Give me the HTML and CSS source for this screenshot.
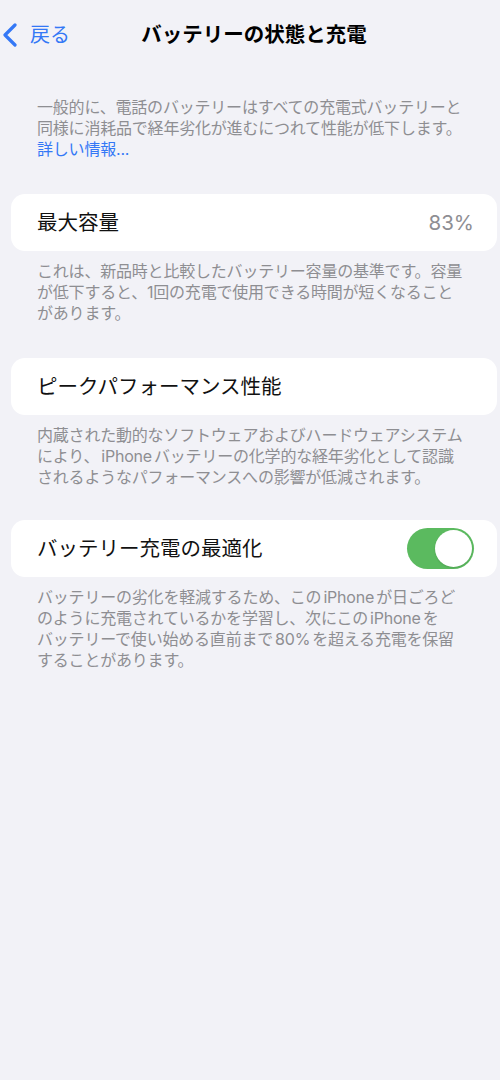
FILE: index.html
```html
<!DOCTYPE html>
<html lang="ja">
<head>
<meta charset="utf-8">
<link rel="stylesheet" href="styles.css">
</head>
<body>
<div class="screen">
  <header class="nav">
    <a class="back">
      <svg class="chev" width="16" height="24" viewBox="0 0 16 24"><path d="M13 2 L3 12 L13 22" fill="none" stroke="#3478F6" stroke-width="3.2" stroke-linecap="round" stroke-linejoin="round"/></svg>
      <span>戻る</span>
    </a>
    <h1 class="title">バッテリーの状態と充電</h1>
  </header>

  <p class="note intro">一般的に、電話のバッテリーはすべての充電式バッテリーと<br>同様に消耗品で経年劣化が進むにつれて性能が低下します。<br><span class="link">詳しい情報...</span></p>

  <section class="group">
    <div class="card">
      <span class="label">最大容量</span>
      <span class="value">83%</span>
    </div>
    <p class="note">これは、新品時と比較したバッテリー容量の基準です。容量<br>が低下すると、1回の充電で使用できる時間が短くなること<br>があります。</p>
  </section>

  <section class="group">
    <div class="card">
      <span class="label">ピークパフォーマンス性能</span>
    </div>
    <p class="note">内蔵された動的なソフトウェアおよびハードウェアシステム<br>により、<span class="latin">iPhone</span>バッテリーの化学的な経年劣化として認識<br>されるようなパフォーマンスへの影響が低減されます。</p>
  </section>

  <section class="group last">
    <div class="card">
      <span class="label">バッテリー充電の最適化</span>
      <span class="toggle"><span class="knob"></span></span>
    </div>
    <p class="note">バッテリーの劣化を軽減するため、この<span class="latin">iPhone</span>が日ごろど<br>のように充電されているかを学習し、次にこの<span class="latin">iPhone</span>を<br>バッテリーで使い始める直前まで<span class="latin">80%</span>を超える充電を保留<br>することがあります。</p>
  </section>
</div>
</body>
</html>
```

FILE: styles.css
```css
html, body {
  margin: 0;
  padding: 0;
  background: #F2F2F7;
}
body {
  font-family: "Inter", "Noto Sans CJK JP", sans-serif;
  color: #000;
}
.screen {
  width: 500px;
  min-height: 1080px;
  background: #F2F2F7;
}
.nav {
  position: relative;
  height: 70px;
  display: flex;
  align-items: center;
  justify-content: center;
}
.back {
  position: absolute;
  left: 2px;
  top: 22px;
  display: flex;
  align-items: center;
  gap: 12px;
  color: #3478F6;
  font-size: 20px;
  line-height: 26px;
}
.chev {
  display: block;
}
.title {
  margin: 0;
  font-size: 20.5px;
  font-weight: 700;
  line-height: 26px;
  padding-left: 8px;
}
.note {
  margin: 0;
  padding: 0 10px 0 37px;
  font-size: 16px;
  letter-spacing: -0.2px;
  line-height: 21px;
  color: #8E8E92;
  white-space: nowrap;
}
.latin {
  padding: 0 2px;
}
.intro {
  margin-top: 27px;
}
.link {
  color: #3478F6;
}
.group {
  margin-top: 34px;
}
.group.last {
  margin-top: 32px;
}
.card {
  margin: 0 3px 0 11px;
  height: 57px;
  background: #fff;
  border-radius: 14px;
  display: flex;
  align-items: center;
  justify-content: space-between;
  padding: 0 23px 0 26px;
}
.label {
  font-size: 20.5px;
  line-height: 26px;
  color: #111;
}
.value {
  font-size: 20.5px;
  line-height: 26px;
  color: #8E8E93;
}
.group .note {
  margin-top: 10px;
}
.toggle {
  width: 67px;
  height: 41px;
  border-radius: 21px;
  background: #5BBA5F;
  display: flex;
  align-items: center;
  justify-content: flex-end;
  padding: 0 2px;
  box-sizing: border-box;
}
.knob {
  width: 37px;
  height: 37px;
  border-radius: 50%;
  background: #fff;
  box-shadow: 0 1px 2px rgba(0,0,0,0.12);
}
```
